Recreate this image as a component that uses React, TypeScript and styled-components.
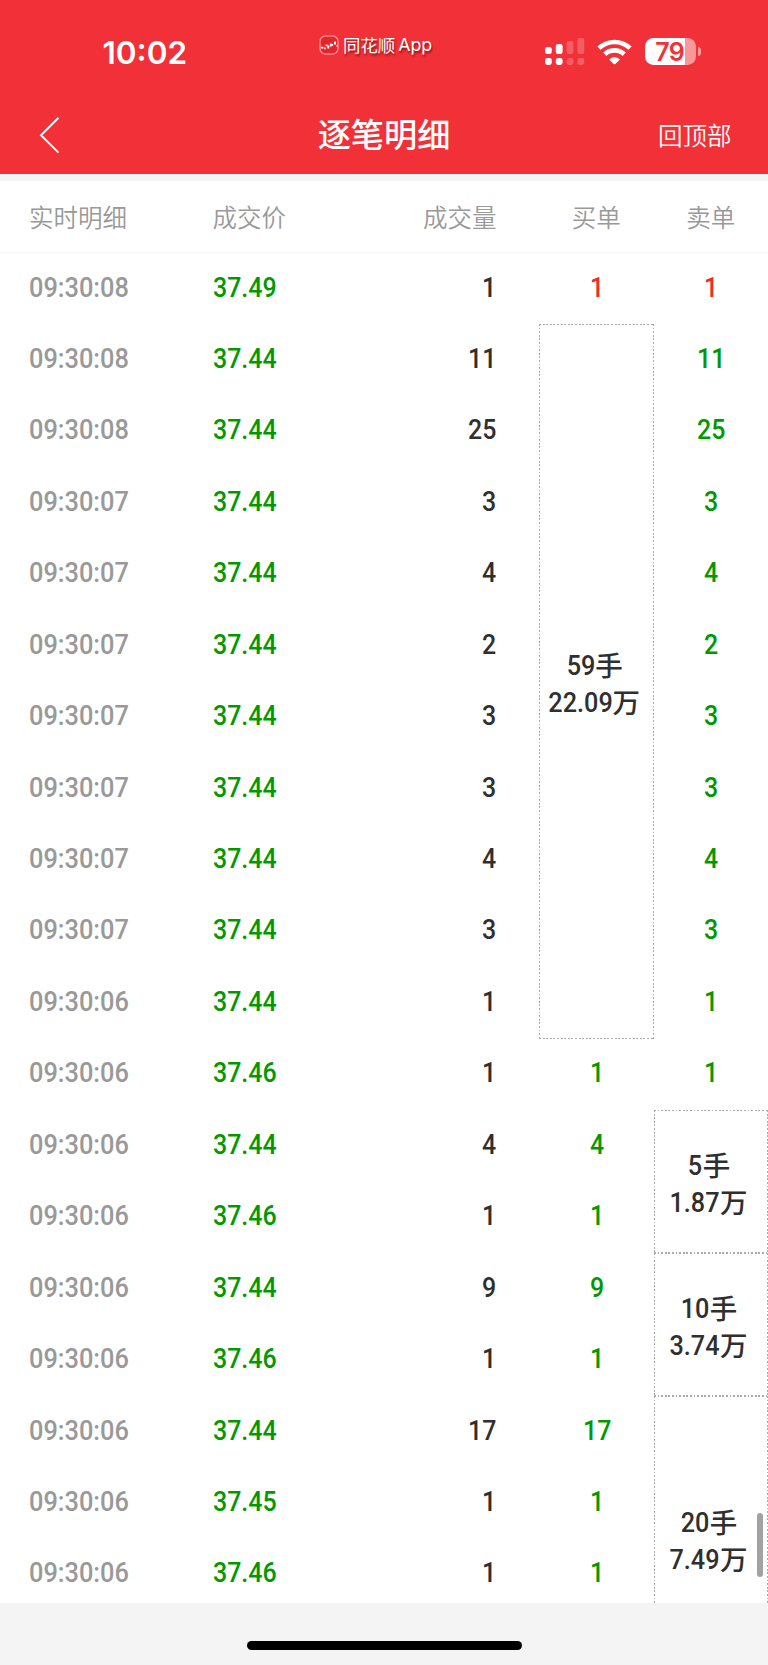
import React from "react";
import styled, { createGlobalStyle } from "styled-components";

const cjk = `"Noto Sans CJK SC", sans-serif`;
const GREEN = "#009900";
const RED = "#ee2d2d";
const INK = "#2f2f2f";
const ROW = 71.45;

const GlobalStyle = createGlobalStyle`
  * { box-sizing: border-box; }
  body { margin: 0; background: #f4f4f4; font-family: ${cjk}; }
`;

const Screen = styled.div`
  position: relative;
  display: flex;
  flex-direction: column;
  width: 768px;
  height: 1665px;
  overflow: hidden;
  background: #f4f4f4;
`;

const TopBar = styled.header`
  flex: none;
  height: 174.4px;
  background: #f23037;
  color: #fff;
`;

const StatusBar = styled.div`
  display: grid;
  grid-template-columns: 310px 1fr 235px;
  height: 98px;
`;

const Clock = styled.time`
  padding: 33px 0 0 102.5px;
  font: 600 31.5px/40px Inter, sans-serif;
`;

const AppTag = styled.div`
  display: flex;
  align-items: center;
  gap: 4px;
  height: 20px;
  margin: 35px 0 0 9px;
  font: 400 17.4px/20px "Noto Sans CJK SC", sans-serif;
  text-shadow: 1px 2px 2px rgba(80, 0, 0, 0.6);
  white-space: nowrap;
`;

const AppName = styled.span`
  display: flex;
  gap: 3px;
`;

const Latin = styled.span`
  font: 400 17.8px/20px Inter, sans-serif;
`;

const Indicators = styled.div`
  display: flex;
  align-items: flex-start;
  padding: 38px 0 0 12px;
`;

const Signal = styled.svg`
  width: 40px;
  height: 27px;
`;

const Wifi = styled.svg`
  width: 35px;
  height: 26px;
  margin: 0.5px 0 0 12.4px;
`;

const Battery = styled.div`
  display: flex;
  align-items: center;
  margin-left: 12.5px;
`;

const BatteryBody = styled.div`
  width: 51px;
  height: 27px;
  padding-right: 1.5px;
  border-radius: 8.5px;
  background: linear-gradient(90deg, #fff 40.3px, #f9989b 40.3px);
  color: #f23037;
  font: 600 25px/28px Inter, sans-serif;
  letter-spacing: -0.6px;
  text-align: center;
`;

const BatteryTip = styled.div`
  width: 3px;
  height: 9px;
  margin-left: 2px;
  border-radius: 0 4px 4px 0;
  background: #f9989b;
`;

const NavBar = styled.nav`
  display: grid;
  grid-template-columns: 160px 1fr 160px;
  align-items: center;
  height: 74px;
`;

const BackIcon = styled.svg`
  width: 22px;
  height: 38px;
  margin-left: 38.5px;
`;

const Title = styled.h1`
  margin: 0;
  padding-bottom: 4px;
  font: 500 33.2px/48px ${cjk};
  text-align: center;
`;

const TopLink = styled.span`
  padding: 0 36.5px 0 0;
  font: 350 24.5px/36px ${cjk};
  text-align: right;
`;

const columns = `
  display: grid;
  grid-template-columns: 212.5px 200px 84px 42.5px 114.5px 114.5px;
`;

const HeadRow = styled.div`
  ${columns}
  flex: none;
  align-items: center;
  height: 71.6px;
  margin-top: 7px;
  padding-top: 1px;
  border-bottom: 1.5px solid #f7f7f7;
  background: #fff;
`;

type Align = "left" | "right" | "center";

const Head = styled.span<{ $col: string; $align: Align }>`
  grid-column: ${(p) => p.$col};
  color: #999;
  font: 350 24.5px/36px ${cjk};
  text-align: ${(p) => p.$align};
  white-space: nowrap;
  &:first-child { padding-left: 29px; }
`;

const Ledger = styled.main`
  ${columns}
  grid-auto-rows: ${ROW}px;
  flex: none;
  height: 1350.2px;
  overflow: hidden;
  background: #fff;
`;

const Cell = styled.div<{ $row: number; $col: number; $align: Align; $color: string }>`
  grid-row: ${(p) => p.$row};
  grid-column: ${(p) => p.$col};
  display: flex;
  align-items: center;
  justify-content: ${(p) => (p.$align === "left" ? "flex-start" : p.$align === "right" ? "flex-end" : "center")};
  padding-bottom: 2.4px;
  padding-left: ${(p) => (p.$col === 1 ? "29px" : p.$align === "center" ? "1px" : "0")};
  color: ${(p) => p.$color};
  font: 500 28.5px/36px Roboto, sans-serif;
`;

const Digits = styled.span<{ $origin: Align; $wide?: boolean }>`
  display: inline-block;
  transform: scaleX(${(p) => (p.$wide ? 0.89 : 0.875)});
  transform-origin: ${(p) => p.$origin} center;
`;

const dots = (angle: number) =>
  `repeating-linear-gradient(${angle}deg, #aaa 0 1.9px, transparent 1.9px 3.6px)`;

const OrderBox = styled.div<{ $row: number; $span: number; $col: number }>`
  grid-row: ${(p) => p.$row} / span ${(p) => p.$span};
  grid-column: ${(p) => p.$col};
  display: flex;
  flex-direction: column;
  align-items: center;
  justify-content: center;
  padding: 4px 3px 0 0;
  background-image: ${dots(90)}, ${dots(90)}, ${dots(180)}, ${dots(180)};
  background-size: 100% 1px, 100% 1px, 1px 100%, 1px 100%;
  background-position: left top, left bottom, left top, right top;
  background-repeat: no-repeat;
  color: ${INK};
`;

const OrderLine = styled.div`
  display: flex;
  justify-content: center;
  font: 500 28.5px/37px Roboto, sans-serif;
`;

const Figure = styled.span<{ $len: number }>`
  transform: scaleX(0.885);
  transform-origin: right center;
  margin-left: ${(p) => -p.$len * 1.9}px;
`;

const Unit = styled.span`
  font: 500 27.5px/35px ${cjk};
`;

const ScrollThumb = styled.div`
  position: absolute;
  right: 5.5px;
  top: 1512.7px;
  width: 5.5px;
  height: 64px;
  border-radius: 3px;
  background: #a2a2a2;
`;

const HomeArea = styled.footer`
  display: flex;
  flex: 1;
  justify-content: center;
  padding-top: 38.3px;
`;

const HomeBar = styled.div`
  width: 275px;
  height: 9px;
  border-radius: 5px;
  background: #000;
`;

type Trade = { time: string; price: string; volume: number; buy?: number; sell?: number; up?: boolean };

const trades: Trade[] = [
  { time: "09:30:08", price: "37.49", volume: 1, buy: 1, sell: 1, up: true },
  { time: "09:30:08", price: "37.44", volume: 11, sell: 11 },
  { time: "09:30:08", price: "37.44", volume: 25, sell: 25 },
  { time: "09:30:07", price: "37.44", volume: 3, sell: 3 },
  { time: "09:30:07", price: "37.44", volume: 4, sell: 4 },
  { time: "09:30:07", price: "37.44", volume: 2, sell: 2 },
  { time: "09:30:07", price: "37.44", volume: 3, sell: 3 },
  { time: "09:30:07", price: "37.44", volume: 3, sell: 3 },
  { time: "09:30:07", price: "37.44", volume: 4, sell: 4 },
  { time: "09:30:07", price: "37.44", volume: 3, sell: 3 },
  { time: "09:30:06", price: "37.44", volume: 1, sell: 1 },
  { time: "09:30:06", price: "37.46", volume: 1, buy: 1, sell: 1 },
  { time: "09:30:06", price: "37.44", volume: 4, buy: 4 },
  { time: "09:30:06", price: "37.46", volume: 1, buy: 1 },
  { time: "09:30:06", price: "37.44", volume: 9, buy: 9 },
  { time: "09:30:06", price: "37.46", volume: 1, buy: 1 },
  { time: "09:30:06", price: "37.44", volume: 17, buy: 17 },
  { time: "09:30:06", price: "37.45", volume: 1, buy: 1 },
  { time: "09:30:06", price: "37.46", volume: 1, buy: 1 },
];

const orders = [
  { row: 2, span: 10, col: 5, lots: "59", amount: "22.09" },
  { row: 13, span: 2, col: 6, lots: "5", amount: "1.87" },
  { row: 15, span: 2, col: 6, lots: "10", amount: "3.74" },
  { row: 17, span: 4, col: 6, lots: "20", amount: "7.49" },
];

function TradeCells({ trade, row }: { trade: Trade; row: number }) {
  const side = trade.up ? RED : GREEN;
  return (
    <>
      <Cell $row={row} $col={1} $align="left" $color="#999">
        <Digits $origin="left" $wide>{trade.time}</Digits>
      </Cell>
      <Cell $row={row} $col={2} $align="left" $color={GREEN}>
        <Digits $origin="left">{trade.price}</Digits>
      </Cell>
      <Cell $row={row} $col={3} $align="right" $color={INK}>
        <Digits $origin="right">{trade.volume}</Digits>
      </Cell>
      {trade.buy !== undefined && (
        <Cell $row={row} $col={5} $align="center" $color={side}>
          <Digits $origin="center">{trade.buy}</Digits>
        </Cell>
      )}
      {trade.sell !== undefined && (
        <Cell $row={row} $col={6} $align="center" $color={side}>
          <Digits $origin="center">{trade.sell}</Digits>
        </Cell>
      )}
    </>
  );
}

function SignalIcon() {
  const bars = [9, 6, 3, 0];
  return (
    <Signal viewBox="0 0 40 27" fill="#fff">
      {bars.map((top, i) => (
        <g key={top} opacity={i < 2 ? 1 : 0.22}>
          <rect x={i * 10.8} y={top} width="6.8" height={16 - top} rx="2.2" />
          <rect x={i * 10.8} y="20" width="6.8" height="7" rx="2.4" />
        </g>
      ))}
    </Signal>
  );
}

function WifiIcon() {
  return (
    <Wifi viewBox="0 0 35 26" fill="none" stroke="#fff" strokeWidth="4.6">
      <path d="M2 9.2A22.5 22.5 0 0 1 33 9.2" />
      <path d="M7.8 15.2A14.2 14.2 0 0 1 27.2 15.2" />
      <path d="M12 20.6Q17.5 15.4 23 20.6L18.3 25Q17.5 25.7 16.7 25Z" fill="#fff" stroke="none" />
    </Wifi>
  );
}

function AppLogo() {
  return (
    <svg width="20" height="20" viewBox="0 0 20 20">
      <rect x="1" y="1" width="18" height="18" rx="5.5" fill="#e5252b" stroke="#fa8b8e" strokeWidth="1.4" />
      <path d="M2 12.6h2.4M5 13.4h1.6M7.6 9.4v1.8M9.3 10.5v3M11.8 8.6v2.8M13.2 9v1.8M16 6.6v3M17.6 11h1" fill="none" stroke="#fff" strokeWidth="1.9" />
    </svg>
  );
}

export default function App() {
  return (
    <Screen>
      <GlobalStyle />
      <TopBar>
        <StatusBar>
          <Clock>10:02</Clock>
          <AppTag>
            <AppLogo />
            <AppName><span>同花顺</span><Latin>App</Latin></AppName>
          </AppTag>
          <Indicators>
            <SignalIcon />
            <WifiIcon />
            <Battery>
              <BatteryBody>79</BatteryBody>
              <BatteryTip />
            </Battery>
          </Indicators>
        </StatusBar>
        <NavBar>
          <BackIcon viewBox="0 0 22 38" fill="none" stroke="#fff" strokeWidth="2">
            <path d="M19.5 1.8L2 19.2L19.5 36.6" />
          </BackIcon>
          <Title>逐笔明细</Title>
          <TopLink>回顶部</TopLink>
        </NavBar>
      </TopBar>
      <HeadRow>
        <Head $col="1" $align="left">实时明细</Head>
        <Head $col="2" $align="left">成交价</Head>
        <Head $col="3" $align="right">成交量</Head>
        <Head $col="5" $align="center">买单</Head>
        <Head $col="6" $align="center">卖单</Head>
      </HeadRow>
      <Ledger>
        {trades.map((trade, i) => (
          <TradeCells key={i} trade={trade} row={i + 1} />
        ))}
        {orders.map((o) => (
          <OrderBox key={o.row} $row={o.row} $span={o.span} $col={o.col}>
            <OrderLine><Figure $len={o.lots.length}>{o.lots}</Figure><Unit>手</Unit></OrderLine>
            <OrderLine><Figure $len={o.amount.length}>{o.amount}</Figure><Unit>万</Unit></OrderLine>
          </OrderBox>
        ))}
      </Ledger>
      <HomeArea><HomeBar /></HomeArea>
      <ScrollThumb />
    </Screen>
  );
}
